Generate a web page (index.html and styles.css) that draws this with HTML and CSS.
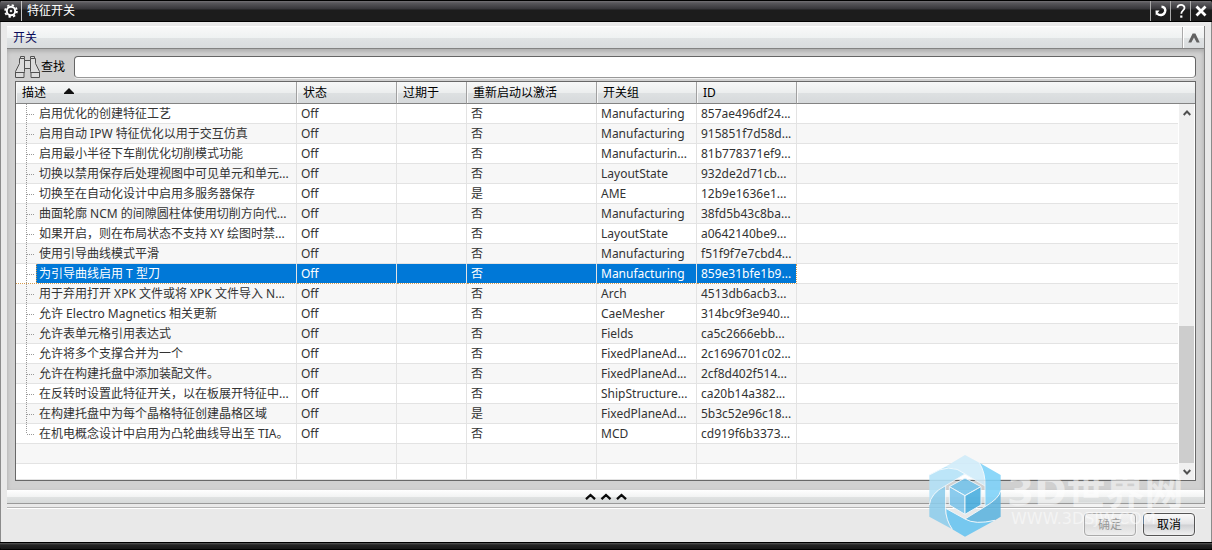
FILE: index.html
```
<!DOCTYPE html>
<html lang="zh-CN">
<head>
<meta charset="utf-8">
<title>特征开关</title>
<link rel="stylesheet" href="styles.css">
</head>
<body>
<main class="dialog">
  <header class="titlebar">
    <span class="title-icon">
      <svg width="14" height="14" viewBox="0 0 14 14"><g fill="none" stroke="#fff"><circle cx="7" cy="7" r="4.2" stroke-width="2"/><circle cx="7" cy="7" r="5.9" stroke-width="1.8" stroke-dasharray="2.3 2.33"/></g><circle cx="7" cy="7" r="1.3" fill="#ddd"/></svg>
    </span>
    <h1 class="title">特征开关</h1>
    <button class="title-btn" aria-label="重置"><svg width="14" height="14" viewBox="0 0 14 14"><path d="M7.500 2.800C10.500 2.800 11.800 5 11 7.800C9.800 11.500 5.500 12 3 9.500" fill="none" stroke="#fff" stroke-width="2.400"/><path d="M1.500 6.500h4L1.800 11.500z" fill="#fff"/></svg></button>
    <button class="title-btn" aria-label="帮助"><svg width="14" height="16" viewBox="0 0 14 16"><path d="M3.500 4.800C3.500 .8 10.800 1 10.500 5C10.400 7.300 7.300 7.500 7.300 10.700" fill="none" stroke="#fff" stroke-width="1.800"/><rect x="6.200" y="12.500" width="2.200" height="2.200" fill="#fff"/></svg></button>
    <button class="title-btn close" aria-label="关闭"><svg width="12" height="12" viewBox="0 0 12 12"><path d="M1.500 1.500l9 9M10.500 1.500l-9 9" stroke="#fff" stroke-width="2.800"/></svg></button>
  </header>
  <div class="content">
    <section class="group">
      <div class="group-head">
        <h2 class="group-title">开关</h2>
        <button class="collapse" aria-label="折叠"><svg width="12" height="10" viewBox="0 0 12 10"><path d="M.3 9.500L4.600 .5h2.800l4.300 9H8.700L6 4.500L3.300 9.500z" fill="#626262"/></svg></button>
      </div>
      <div class="group-body">
        <div class="search">
          <svg class="binoculars" width="26" height="24" viewBox="0 0 26 24"><g fill="#dcdcdc" stroke="#505050" stroke-width="1"><path d="M4.500 3.500h5v13l-.5 1.500v4.500h-8.500v-6l4-8z"/><path d="M20.500 3.500h-5v13l.5 1.500v4.500h8.500v-6l-4-8z"/><path d="M5.500 1.500h4v2h-4zM15.500 1.500h4v2h-4zM9.500 5.500h6v8h-6z"/><path d="M.5 17.500h9M15.500 17.500h9" fill="none"/></g></svg>
          <label class="search-label" for="find">查找</label>
          <input class="search-box" id="find" type="text">
        </div>
        <div class="grid">
          <table class="features">
            <colgroup><col class="c-desc"><col class="c-state"><col class="c-expire"><col class="c-restart"><col class="c-group"><col class="c-id"><col></colgroup>
            <thead><tr><th>描述<svg class="sort" width="10" height="6" viewBox="0 0 10 6"><path d="M5 0l5 5v1H0V5z" fill="#111"/></svg></th><th>状态</th><th>过期于</th><th>重新启动以激活</th><th>开关组</th><th>ID</th><th></th></tr></thead>
            <tbody>
              <tr><td><span>启用优化的创建特征工艺</span></td><td>Off</td><td></td><td>否</td><td>Manufacturing</td><td>857ae496df24...</td><td></td></tr>
              <tr><td><span>启用自动 IPW 特征优化以用于交互仿真</span></td><td>Off</td><td></td><td>否</td><td>Manufacturing</td><td>915851f7d58d...</td><td></td></tr>
              <tr><td><span>启用最小半径下车削优化切削模式功能</span></td><td>Off</td><td></td><td>否</td><td>Manufacturin...</td><td>81b778371ef9...</td><td></td></tr>
              <tr><td><span>切换以禁用保存后处理视图中可见单元和单元...</span></td><td>Off</td><td></td><td>否</td><td>LayoutState</td><td>932de2d71cb...</td><td></td></tr>
              <tr><td><span>切换至在自动化设计中启用多服务器保存</span></td><td>Off</td><td></td><td>是</td><td>AME</td><td>12b9e1636e1...</td><td></td></tr>
              <tr><td><span>曲面轮廓 NCM 的间隙圆柱体使用切削方向代...</span></td><td>Off</td><td></td><td>否</td><td>Manufacturing</td><td>38fd5b43c8ba...</td><td></td></tr>
              <tr><td><span>如果开启，则在布局状态不支持 XY 绘图时禁...</span></td><td>Off</td><td></td><td>否</td><td>LayoutState</td><td>a0642140be9...</td><td></td></tr>
              <tr><td><span>使用引导曲线模式平滑</span></td><td>Off</td><td></td><td>否</td><td>Manufacturing</td><td>f51f9f7e7cbd4...</td><td></td></tr>
              <tr class="selected"><td><span>为引导曲线启用 T 型刀</span></td><td>Off</td><td></td><td>否</td><td>Manufacturing</td><td>859e31bfe1b9...</td><td></td></tr>
              <tr><td><span>用于弃用打开 XPK 文件或将 XPK 文件导入 N...</span></td><td>Off</td><td></td><td>否</td><td>Arch</td><td>4513db6acb3...</td><td></td></tr>
              <tr><td><span>允许 Electro Magnetics 相关更新</span></td><td>Off</td><td></td><td>否</td><td>CaeMesher</td><td>314bc9f3e940...</td><td></td></tr>
              <tr><td><span>允许表单元格引用表达式</span></td><td>Off</td><td></td><td>否</td><td>Fields</td><td>ca5c2666ebb...</td><td></td></tr>
              <tr><td><span>允许将多个支撑合并为一个</span></td><td>Off</td><td></td><td>否</td><td>FixedPlaneAd...</td><td>2c1696701c02...</td><td></td></tr>
              <tr><td><span>允许在构建托盘中添加装配文件。</span></td><td>Off</td><td></td><td>否</td><td>FixedPlaneAd...</td><td>2cf8d402f514...</td><td></td></tr>
              <tr><td><span>在反转时设置此特征开关，以在板展开特征中...</span></td><td>Off</td><td></td><td>否</td><td>ShipStructure...</td><td>ca20b14a382...</td><td></td></tr>
              <tr><td><span>在构建托盘中为每个晶格特征创建晶格区域</span></td><td>Off</td><td></td><td>是</td><td>FixedPlaneAd...</td><td>5b3c52e96c18...</td><td></td></tr>
              <tr class="last"><td><span>在机电概念设计中启用为凸轮曲线导出至 TIA。</span></td><td>Off</td><td></td><td>否</td><td>MCD</td><td>cd919f6b3373...</td><td></td></tr>
              <tr class="blank"><td></td><td></td><td></td><td></td><td></td><td></td><td></td></tr>
              <tr class="blank short"><td></td><td></td><td></td><td></td><td></td><td></td><td></td></tr>
            </tbody>
          </table>
          <div class="side">
            <div class="side-head"></div>
            <div class="scrollbar">
              <button class="scroll-btn" aria-label="向上滚动"><svg width="8" height="6" viewBox="0 0 8 6"><path d="M.7 5L4 1.500L7.300 5" fill="none" stroke="#505050" stroke-width="1.900"/></svg></button>
              <div class="track"><div class="thumb"></div></div>
              <button class="scroll-btn" aria-label="向下滚动"><svg width="8" height="6" viewBox="0 0 8 6"><path d="M.7 1L4 4.500L7.300 1" fill="none" stroke="#505050" stroke-width="1.900"/></svg></button>
            </div>
          </div>
        </div>
      </div>
      <button class="shrink" aria-label="收起"><svg width="42" height="7" viewBox="0 0 42 7"><path d="M1 6.200L5.500 2L10 6.200M16.500 6.200L21 2L25.500 6.200M32 6.200L36.500 2L41 6.200" fill="none" stroke="#0a0a0a" stroke-width="2.300"/></svg></button>
    </section>
    <footer class="actions">
      <button class="btn" disabled>确定</button>
      <button class="btn">取消</button>
    </footer>
  </div>
  <div class="frame-bottom"></div>
  <svg class="watermark" width="270" height="84" viewBox="0 0 270 84" aria-hidden="true">
    <g transform="scale(.3333) translate(-24 -15)" opacity=".88" stroke="#eef8fd" stroke-width="3">
      <g stroke="none">
        <path d="M75 51L135 15L178 38Q197 70 195 108L135 72Q110 50 75 51z" fill="#d0ecfa"/>
        <path d="M178 38L242 75V122Q238 145 195 170V108Q197 70 178 38z" fill="#7dd2f9"/>
        <path d="M242 122V200L225 211Q165 225 135 207L195 170Q238 145 242 122z" fill="#5db4df"/>
        <path d="M77 175L135 207Q165 225 225 211L135 260L97 238Q77 210 77 175z" fill="#67c4f0"/>
        <path d="M28 165Q32 130 75 108V175Q77 210 97 238L28 200z" fill="#8dcdec"/>
        <path d="M28 75L75 51Q110 50 135 72L75 108Q32 130 28 165z" fill="#b3e2f8"/>
      </g>
      <path d="M28 75Q90 35 135 72L195 108M178 38Q197 70 195 108V170M242 122Q238 145 195 170L135 207M225 211Q165 225 135 207L77 175M97 238Q77 210 77 175V108M28 165Q32 130 75 108L135 72" fill="none"/>
      <path d="M88 110L135 84L183 110L135 137z" fill="#74c4ec"/>
      <path d="M88 110L135 137V193L88 165z" fill="#7cc5ec"/>
      <path d="M183 110L135 137V193L183 165z" fill="#46addf"/>
    </g>
    <text class="wm-name" x="79" y="50">3D世界网</text>
    <text class="wm-url" x="83" y="69">WWW.3DSJW.COM</text>
  </svg>
</main>
</body>
</html>
```
FILE: styles.css
```
* { box-sizing: border-box; }
body { margin: 0; background: #000; font: 12px/18px "Noto Sans", "Noto Sans CJK SC", sans-serif; color: #000; }
button { font: inherit; padding: 0; margin: 0; border: 0; background: none; }
svg { display: block; flex: none; }
h1, h2 { margin: 0; font-size: 12px; font-weight: 400; }

.dialog { position: relative; display: flex; flex-direction: column; min-height: 100vh; overflow: hidden; border-radius: 4px; background: #1c1c1c; }
.titlebar { display: flex; height: 22px; border-top: 1px solid #000; border-bottom: 1px solid #000; background: linear-gradient(#747276 0, #58575b 2px, #37363a 8px, #1c1c1c 9px); color: #fff; }
.title-icon { display: flex; align-items: center; justify-content: center; width: 22px; border-right: 1px solid #c4c4c4; }
.title { flex: 1; padding-left: 5px; line-height: 20px; }
.title-btn { display: flex; align-items: center; justify-content: center; width: 20px; border-left: 1px solid #aaa; }
.close { width: 21px; margin-right: 1px; }

.content { flex: 1; display: flex; flex-direction: column; padding: 4px 6px 0; border-left: 1px solid #8b8b8b; border-right: 1px solid #8b8b8b; background: #e9e9e9; }
.group { border-right: 1px solid #858585; }
.group-head { display: flex; height: 23px; border-top: 1px solid #fff; border-bottom: 1px solid #838383; background: linear-gradient(#f8f8f8 0, #eff2f2 50%, #e0e3e4 51%, #d9dcde 100%); }
.group-title { flex: 1; padding-left: 6px; line-height: 21px; color: #0b0b5a; }
.collapse { display: flex; align-items: center; justify-content: center; width: 22px; border-left: 1px solid #aaa; box-shadow: inset 1px 0 #fff; }
.group-body { padding: 7px 8px 9px; background: #d0d0d0; box-shadow: inset 0 2px 4px #a8a8a8; }
.search { display: flex; align-items: center; height: 22px; margin-bottom: 3px; }
.search-label { width: 33px; line-height: 20px; }
.search-box { flex: 1; min-width: 0; height: 22px; padding: 0 6px; border: 1px solid #656565; border-bottom-color: #999; border-radius: 4px; background: #fff; font: inherit; outline: 0; box-shadow: 0 1px #f2f2f2; }

.grid { display: flex; border: 1px solid #686868; background: #fff; }
.features { flex: 1; width: 0; table-layout: fixed; border-collapse: separate; border-spacing: 0; color: #333; }
.c-desc { width: 281px; }
.c-state, .c-group, .c-id { width: 100px; }
.c-expire { width: 70px; }
.c-restart { width: 130px; }
.features th, .side-head { height: 22px; border-bottom: 1px solid #838383; background: linear-gradient(#f7f8f8 0, #eceeee 50%, #dee1e2 51%, #d6d9db 100%); }
.features th { padding: 0 0 0 6px; border-right: 1px solid #a0a0a0; box-shadow: inset 1px 0 #f8f8f8; color: #000; font-weight: 400; line-height: 20px; text-align: left; white-space: nowrap; }
.features th:last-child { border-right: 0; }
.sort { display: inline-block; margin: 0 0 3px 18px; }
.features td { height: 20px; padding: 0 0 0 4px; overflow: hidden; border-right: 1px solid #e3e3e3; border-bottom: 1px solid #e3e3e3; line-height: 19px; white-space: nowrap; }
.features td:last-child { border-right: 0; }
.features tr:nth-child(even) td { background-color: #f7f7f7; }
.features td:first-child { padding-left: 20px; background-image: repeating-linear-gradient(#999 0 1px, transparent 1px 2px), repeating-linear-gradient(90deg, #999 0 1px, transparent 1px 2px); background-size: 1px 100%, 8px 1px; background-position: 10px 0, 11px 10px; background-repeat: no-repeat; }
.features .last td:first-child { background-size: 1px 10px, 8px 1px; }
.features .blank td:first-child { background-image: none; }
.features .short td { height: 16px; line-height: 12px; }
.features td:first-child span { display: block; padding-left: 3px; }
.features .selected td:not(:last-child) { border-bottom: 1px dotted #d69a4c; color: #fff; background-color: #0078d7; background-clip: padding-box; }
.features .selected td:first-child { background-color: transparent; }
.features .selected td:first-child span { border-left: 1px dotted #d69a4c; padding-left: 2px; background: #0078d7; }
.features .selected td:nth-last-child(2) { border-right: 1px dotted #d69a4c; }

.side { display: flex; flex-direction: column; width: 16px; margin-left: 1px; }
.side-head { margin-left: -1px; }
.scrollbar { flex: 1; display: flex; flex-direction: column; width: 15px; background: #f0f0f0; }
.scroll-btn { display: flex; align-items: center; justify-content: center; height: 17px; }
.track { flex: 1; display: flex; flex-direction: column; justify-content: flex-end; }
.thumb { height: 40%; background: #cdcdcd; }

.shrink { display: flex; align-items: center; justify-content: center; width: 100%; height: 14px; border-bottom: 1px solid #999; background: linear-gradient(#fff 0, #f3f4f4 50%, #e1e3e3 51%, #d7dada 100%); }
.actions { display: flex; justify-content: flex-end; gap: 7px; margin-top: 3px; padding: 5px 10px 6px 0; border-top: 1px solid #b4b4b4; box-shadow: inset 0 1px #fff; }
.btn { width: 52px; height: 23px; border: 1px solid #555; border-radius: 4px; background: linear-gradient(#fafafa 0, #e4e4e6 48%, #cfd0d3 52%, #f0f0f0 100%); box-shadow: 0 0 0 1px #f4f4f4; line-height: 20px; }
.btn:disabled { border-color: #aaa; color: #999; background: linear-gradient(#f3f3f3 0, #e9e9e9 48%, #dedede 52%, #eee 100%); }
.frame-bottom { height: 8px; border-top: 1px solid #000; border-bottom: 1px solid #000; background: linear-gradient(#5a5a5a 0, #242424 2px, #181818 100%); }

.watermark { position: absolute; right: 14px; bottom: 11px; pointer-events: none; }
.wm-name { font: 700 39px "DejaVu Sans", "Noto Sans CJK SC", sans-serif; fill: #fff; fill-opacity: .5; }
.wm-url { font: 16px "DejaVu Sans", sans-serif; fill: #fff; fill-opacity: .5; }
```
